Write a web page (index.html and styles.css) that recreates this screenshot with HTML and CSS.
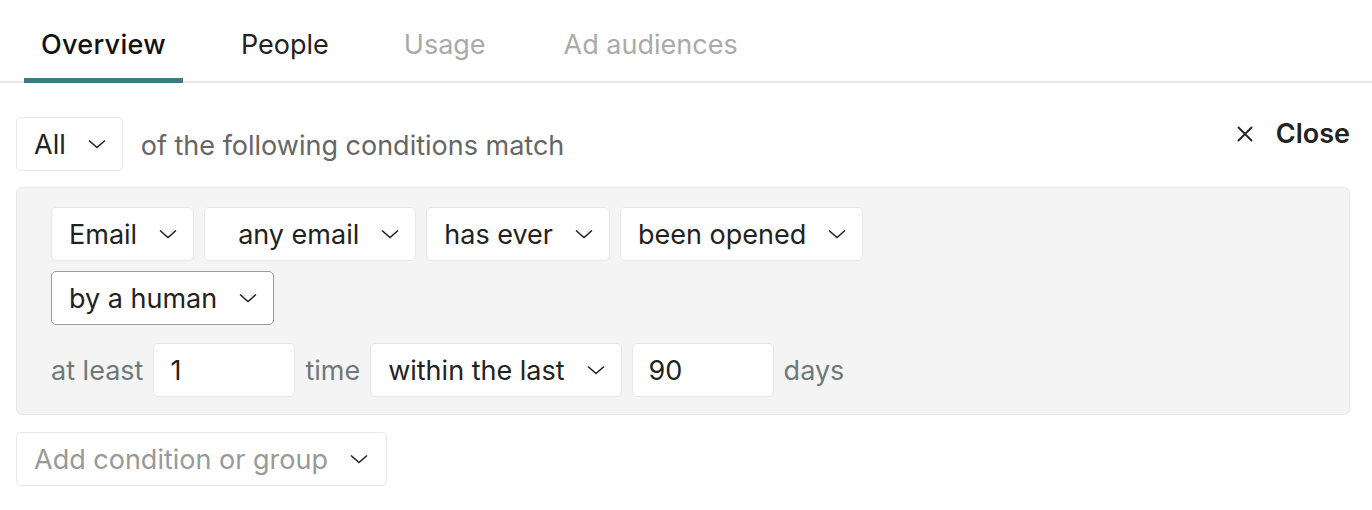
FILE: index.html
```html
<!DOCTYPE html>
<html>
  <head>
    <title>Segment conditions</title>
    <link rel="stylesheet" href="styles.css">
  </head>
  <body>
    <div class="tabs">
      <div class="tab active">Overview</div>
      <div class="tab">People</div>
      <div class="tab muted">Usage</div>
      <div class="tab muted">Ad audiences</div>
    </div>

    <div class="match-row">
      <div class="box">All <span class="chev"><svg width="18" height="10" viewBox="0 0 18 10"><path d="M1 1.5 L9 8.5 L17 1.5" fill="none" stroke="#222" stroke-width="1.6"/></svg></span></div>
      <span class="hint">of the following conditions match</span>
      <div class="close">
        <svg width="18" height="18" viewBox="0 0 18 18"><path d="M2 2 L16 16 M16 2 L2 16" stroke="#222" stroke-width="1.8"/></svg>
        <b>Close</b>
      </div>
    </div>

    <div class="panel">
      <div class="line">
        <div class="box">Email <span class="chev"><svg width="18" height="10" viewBox="0 0 18 10"><path d="M1 1.5 L9 8.5 L17 1.5" fill="none" stroke="#222" stroke-width="1.6"/></svg></span></div>
        <div class="box wide-pad">any email <span class="chev"><svg width="18" height="10" viewBox="0 0 18 10"><path d="M1 1.5 L9 8.5 L17 1.5" fill="none" stroke="#222" stroke-width="1.6"/></svg></span></div>
        <div class="box">has ever <span class="chev"><svg width="18" height="10" viewBox="0 0 18 10"><path d="M1 1.5 L9 8.5 L17 1.5" fill="none" stroke="#222" stroke-width="1.6"/></svg></span></div>
        <div class="box">been opened <span class="chev"><svg width="18" height="10" viewBox="0 0 18 10"><path d="M1 1.5 L9 8.5 L17 1.5" fill="none" stroke="#222" stroke-width="1.6"/></svg></span></div>
      </div>
      <div class="line">
        <div class="box focus">by a human <span class="chev"><svg width="18" height="10" viewBox="0 0 18 10"><path d="M1 1.5 L9 8.5 L17 1.5" fill="none" stroke="#222" stroke-width="1.6"/></svg></span></div>
      </div>
      <div class="line last">
        <span class="label">at least</span>
        <div class="box field">1</div>
        <span class="label">time</span>
        <div class="box">within the last <span class="chev"><svg width="18" height="10" viewBox="0 0 18 10"><path d="M1 1.5 L9 8.5 L17 1.5" fill="none" stroke="#222" stroke-width="1.6"/></svg></span></div>
        <div class="box field">90</div>
        <span class="label">days</span>
      </div>
    </div>

    <div class="add-row">
      <div class="box placeholder">Add condition or group <span class="chev"><svg width="18" height="10" viewBox="0 0 18 10"><path d="M1 1.5 L9 8.5 L17 1.5" fill="none" stroke="#222" stroke-width="1.6"/></svg></span></div>
    </div>
  </body>
</html>
```

FILE: styles.css
```css
body {
  margin: 0;
  background: #fff;
  color: #222;
  font-family: Inter, "Noto Sans", sans-serif;
  font-size: 27px;
}

.tabs {
  display: flex;
  gap: 41px;
  padding: 0 0 0 24px;
  border-bottom: 2px solid #e6e6e6;
  height: 83px;
  box-sizing: border-box;
}

.tab {
  padding: 28px 17px 0 17px;
  height: 81px;
  box-sizing: border-box;
  color: #222;
}

.tab.active {
  font-weight: 500;
  letter-spacing: 0.3px;
  color: #111;
  border-bottom: 5px solid #3d7a84;
  height: 83px;
  margin-bottom: -2px;
}

.tab.muted {
  color: #aaa;
}

.tab.muted + .tab.muted {
  margin-left: 3px;
}

.match-row {
  display: flex;
  align-items: center;
  padding: 34px 22px 0 16px;
}

.hint {
  color: #666;
  margin-left: 18px;
  margin-top: 2px;
}

.close {
  margin-left: auto;
  display: flex;
  align-items: center;
  gap: 22px;
  align-self: flex-start;
  margin-top: 0px;
}

.close b {
  font-weight: 600;
}

.box {
  display: flex;
  align-items: center;
  height: 54px;
  box-sizing: border-box;
  padding: 0 16px 0 17px;
  background: #fff;
  border: 1px solid #e8e8e8;
  border-radius: 5px;
  white-space: nowrap;
}

.chev {
  display: flex;
  margin-left: 22px;
}

.wide-pad {
  padding-left: 33px;
}

.focus {
  border-color: #9a9a9a;
}

.field {
  width: 142px;
  padding-left: 16px;
}

.placeholder {
  color: #999;
  padding-right: 18px;
}

.panel {
  margin: 16px 22px 0 16px;
  background: #f4f4f4;
  border: 1px solid #e8e8e8;
  border-radius: 6px;
  padding: 19px 34px 17px 34px;
}

.line {
  display: flex;
  gap: 10px;
  align-items: center;
  margin-bottom: 10px;
}

.line.last {
  margin-top: 18px;
  margin-bottom: 0;
}

.label {
  color: #6c7a7a;
}

.add-row {
  display: flex;
  padding: 17px 0 0 16px;
}
```
